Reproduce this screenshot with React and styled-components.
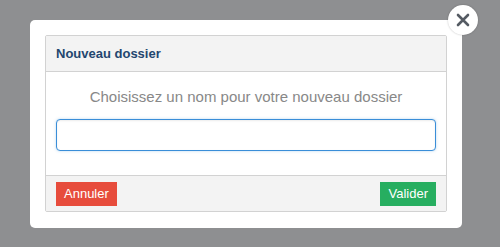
import React from 'react';
import styled, { createGlobalStyle } from 'styled-components';

const GlobalStyle = createGlobalStyle`
  html, body {
    margin: 0;
    padding: 0;
    background: #8e8f91;
  }
  body {
    font-family: "Liberation Sans", Arial, sans-serif;
  }
`;

const Overlay = styled.div`
  width: 500px;
  height: 247px;
  padding: 20px 0 0 30px;
  box-sizing: border-box;
`;

const Modal = styled.div`
  position: relative;
  width: 432px;
  background: #fff;
  border-radius: 5px;
  padding: 15px 15px 16px 15px;
  box-sizing: border-box;
`;

const CloseButton = styled.button`
  position: absolute;
  top: -15px;
  right: -16px;
  width: 30px;
  height: 30px;
  border: none;
  border-radius: 50%;
  background: #fff;
  box-shadow: 0 0 2px rgba(0, 0, 0, 0.25);
  display: flex;
  align-items: center;
  justify-content: center;
  padding: 0;
  cursor: pointer;
`;

const Panel = styled.div`
  border: 1px solid #d2d2d2;
  border-radius: 2px;
  overflow: hidden;
`;

const Header = styled.div`
  background: #f3f3f3;
  border-bottom: 1px solid #d2d2d2;
  height: 35px;
  padding: 0 10px;
  display: flex;
  align-items: center;
`;

const Title = styled.h3`
  margin: 0;
  font-size: 13px;
  font-weight: bold;
  color: #23466f;
`;

const Body = styled.div`
  padding: 15px 10px 24px 10px;
  display: flex;
  flex-direction: column;
  gap: 12px;
`;

const Prompt = styled.p`
  margin: 0;
  text-align: center;
  font-size: 15px;
  color: #888;
  line-height: 20px;
`;

const NameInput = styled.input`
  height: 32px;
  box-sizing: border-box;
  border: 1px solid #3a8ed8;
  border-radius: 4px;
  padding: 0 6px;
  font-family: inherit;
  font-size: 14px;
  color: #333;
  outline: none;
  box-shadow: inset 0 1px 2px rgba(0, 0, 0, 0.08), 0 0 3px rgba(58, 142, 216, 0.35);
`;

const Footer = styled.div`
  background: #f3f3f3;
  border-top: 1px solid #d2d2d2;
  height: 35px;
  padding: 0 10px;
  display: flex;
  align-items: center;
  justify-content: space-between;
`;

const Button = styled.button`
  height: 24px;
  padding: 0 8px;
  border: none;
  border-radius: 0;
  background: ${(p) => p.$color};
  color: #fff;
  font-family: inherit;
  font-size: 13px;
  cursor: pointer;
`;

export default function App() {
  return (
    <>
      <GlobalStyle />
      <Overlay>
        <Modal>
          <CloseButton aria-label="Fermer">
            <svg width="14" height="14" viewBox="0 0 14 14">
              <path d="M2 2 L12 12 M12 2 L2 12" stroke="#555b63" strokeWidth="2.6" strokeLinecap="round" />
            </svg>
          </CloseButton>
          <Panel>
            <Header>
              <Title>Nouveau dossier</Title>
            </Header>
            <Body>
              <Prompt>Choisissez un nom pour votre nouveau dossier</Prompt>
              <NameInput autoFocus />
            </Body>
            <Footer>
              <Button $color="#e74c3c">Annuler</Button>
              <Button $color="#27ae60">Valider</Button>
            </Footer>
          </Panel>
        </Modal>
      </Overlay>
    </>
  );
}
